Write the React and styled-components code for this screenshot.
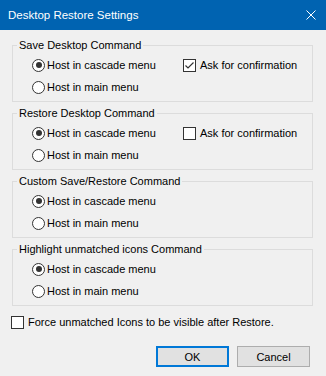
import React from "react";
import styled, { createGlobalStyle } from "styled-components";

const Global = createGlobalStyle`
  html, body { margin: 0; padding: 0; }
  body {
    width: 326px;
    height: 376px;
    overflow: hidden;
    background: #f0f0f0;
    font-family: "Liberation Sans", Arial, sans-serif;
    font-size: 11px;
    color: #000;
  }
`;

const Window = styled.div`
  width: 326px;
  height: 376px;
  display: flex;
  flex-direction: column;
  background: #f0f0f0;
`;

const TitleBar = styled.div`
  height: 30px;
  flex: none;
  background: #0063b1;
  color: #fff;
  display: flex;
  align-items: center;
  justify-content: space-between;
  padding: 0 10px 0 8px;
  font-size: 11.5px;
`;

const CloseBtn = styled.svg`
  width: 10px;
  height: 10px;
  display: block;
`;

const Content = styled.div`
  padding: 8px 13px 0 12px;
  display: flex;
  flex-direction: column;
`;

const Group = styled.fieldset`
  margin: 0 0 4px 0;
  padding: 0;
  border: 1px solid #dcdcdc;
  min-width: 0;
`;

const Legend = styled.legend`
  margin-left: 4px;
  padding: 0 2px;
  line-height: 14px;
  height: 14px;
  font-size: 11px;
`;

const GroupBody = styled.div`
  display: grid;
  grid-template-columns: 151px auto;
  grid-auto-rows: 20px;
  row-gap: 2px;
  padding: 3px 0 4px 19px;
`;

const Option = styled.label`
  display: flex;
  align-items: center;
  gap: 2px;
  white-space: nowrap;
  line-height: 20px;
`;

const RadioMark = styled.span`
  width: 11px;
  height: 11px;
  border: 1px solid #333;
  border-radius: 50%;
  background: #fff;
  display: flex;
  align-items: center;
  justify-content: center;
  flex: none;
  &::after {
    content: "";
    width: 6px;
    height: 6px;
    border-radius: 50%;
    background: ${(p) => (p.$on ? "#333" : "transparent")};
  }
`;

const CheckMark = styled.span`
  width: 11px;
  height: 11px;
  border: 1px solid #333;
  background: #fff;
  display: flex;
  align-items: center;
  justify-content: center;
  flex: none;
  margin-right: 2px;
`;

const Radio = ({ on, children }) => (
  <Option>
    <RadioMark $on={on} />
    {children}
  </Option>
);

const Check = ({ on, children }) => (
  <Option>
    <CheckMark>
      {on && (
        <svg width="11" height="11" viewBox="0 0 11 11">
          <path d="M1.5 5.5 L4 8 L9.5 2.5" fill="none" stroke="#333" strokeWidth="1.2" />
        </svg>
      )}
    </CheckMark>
    {children}
  </Option>
);

const ForceRow = styled.div`
  height: 20px;
  margin-top: 2px;
  margin-left: -1px;
  display: flex;
  align-items: center;
`;

const Buttons = styled.div`
  display: flex;
  justify-content: flex-end;
  gap: 8px;
  margin-top: 14px;
  padding-right: 3px;
`;

const Button = styled.button`
  width: 73px;
  height: 21px;
  box-sizing: border-box;
  font-family: inherit;
  font-size: 11px;
  color: #000;
  background: #e1e1e1;
  border: ${(p) => (p.$default ? "2px solid #0078d7" : "1px solid #adadad")};
  padding: 0;
  margin: 0;
`;

const groups = [
  { title: "Save Desktop Command", confirm: true },
  { title: "Restore Desktop Command", confirm: false },
  { title: "Custom Save/Restore Command" },
  { title: "Highlight unmatched icons Command" },
];

export default function App() {
  return (
    <>
      <Global />
      <Window>
        <TitleBar>
          <span>Desktop Restore Settings</span>
          <CloseBtn viewBox="0 0 10 10">
            <path d="M0.5 0.5 L9.5 9.5 M9.5 0.5 L0.5 9.5" stroke="#fff" strokeWidth="1" />
          </CloseBtn>
        </TitleBar>
        <Content>
          {groups.map((g) => (
            <Group key={g.title}>
              <Legend>{g.title}</Legend>
              <GroupBody>
                <Radio on>Host in cascade menu</Radio>
                {g.confirm !== undefined ? (
                  <Check on={g.confirm}>Ask for confirmation</Check>
                ) : (
                  <span />
                )}
                <Radio>Host in main menu</Radio>
              </GroupBody>
            </Group>
          ))}
          <ForceRow>
            <Check>Force unmatched Icons to be visible after Restore.</Check>
          </ForceRow>
          <Buttons>
            <Button $default>OK</Button>
            <Button>Cancel</Button>
          </Buttons>
        </Content>
      </Window>
    </>
  );
}
